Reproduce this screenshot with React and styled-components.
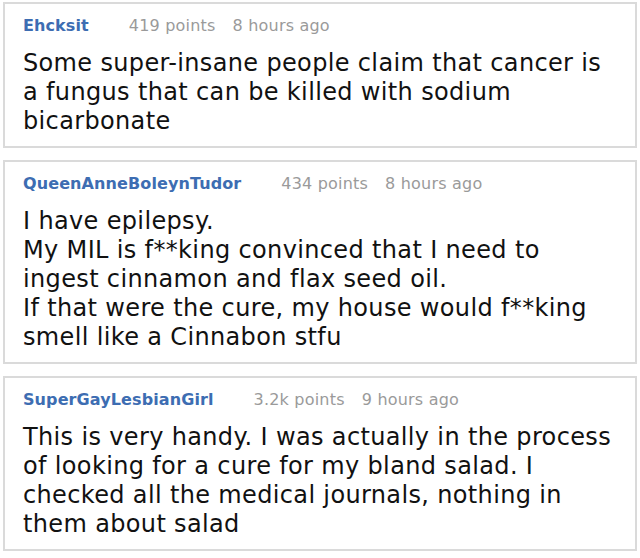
import styled, { createGlobalStyle } from 'styled-components';

const GlobalStyle = createGlobalStyle`
  html, body {
    margin: 0;
    padding: 0;
    background: #ffffff;
  }
  body {
    font-family: "DejaVu Sans", Verdana, sans-serif;
  }
`;

const Feed = styled.div`
  display: flex;
  flex-direction: column;
  gap: 12px;
  padding: 2px 3px;
`;

const Card = styled.div`
  background: #fff;
  border: 2px solid #dadada;
  padding: 12px 18px 10px 18px;
`;

const Header = styled.div`
  display: flex;
  align-items: baseline;
  font-size: 16px;
  line-height: 20px;
`;

const User = styled.a`
  color: #3d6db2;
  font-weight: bold;
  text-decoration: none;
  margin-right: 40px;
  letter-spacing: 0.1px;
`;

const Meta = styled.span`
  color: #9a9a9a;
  margin-right: 17px;
  letter-spacing: 0.2px;
`;

const Body = styled.div`
  margin-top: 13px;
  font-size: 24px;
  line-height: 29px;
  color: #111;
  letter-spacing: 0.35px;
`;

const comments = [
  {
    user: 'Ehcksit',
    points: '419 points',
    time: '8 hours ago',
    lines: ['Some super-insane people claim that cancer is a fungus that can be killed with sodium bicarbonate'],
  },
  {
    user: 'QueenAnneBoleynTudor',
    points: '434 points',
    time: '8 hours ago',
    lines: [
      'I have epilepsy.',
      'My MIL is f**king convinced that I need to ingest cinnamon and flax seed oil.',
      'If that were the cure, my house would f**king smell like a Cinnabon stfu',
    ],
  },
  {
    user: 'SuperGayLesbianGirl',
    points: '3.2k points',
    time: '9 hours ago',
    lines: ['This is very handy. I was actually in the process of looking for a cure for my bland salad. I checked all the medical journals, nothing in them about salad'],
  },
];

const App = () => {
  return (
    <>
      <GlobalStyle />
      <Feed>
        {comments.map((c) => (
          <Card key={c.user}>
            <Header>
              <User href="/">{c.user}</User>
              <Meta>{c.points}</Meta>
              <Meta>{c.time}</Meta>
            </Header>
            <Body>
              {c.lines.map((l, i) => (
                <div key={i}>{l}</div>
              ))}
            </Body>
          </Card>
        ))}
      </Feed>
    </>
  );
};

export default App;
